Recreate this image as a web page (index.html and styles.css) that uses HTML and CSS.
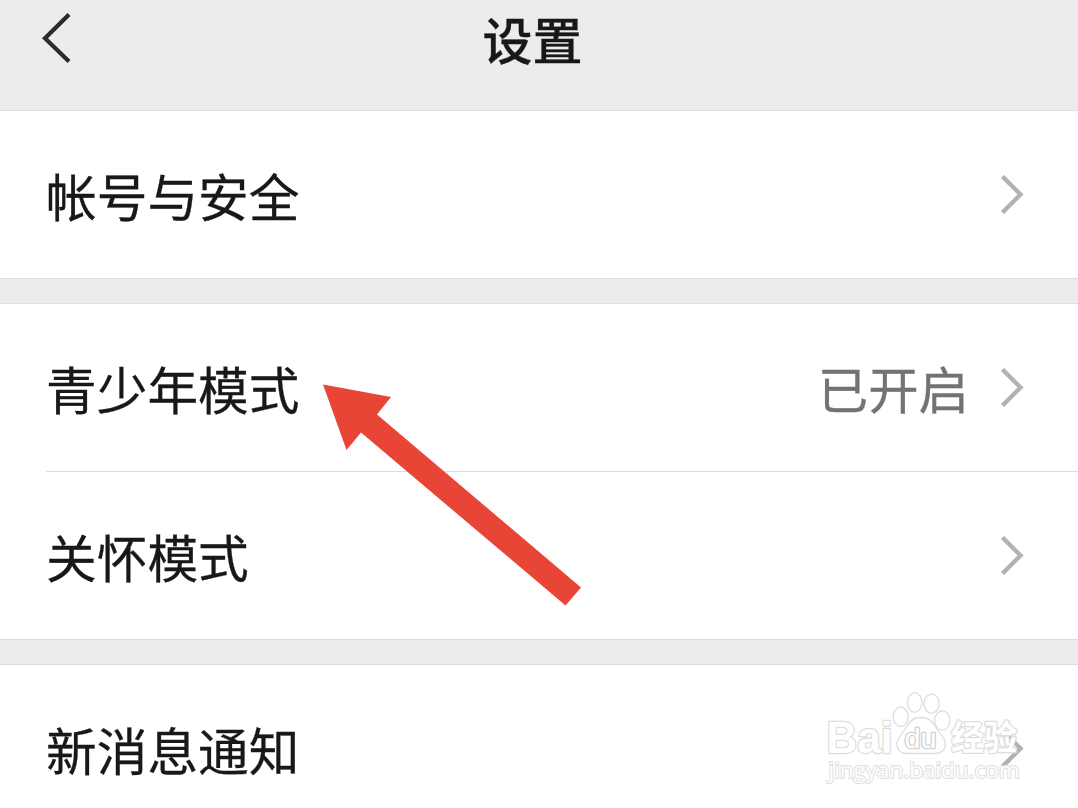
FILE: index.html
```
<!DOCTYPE html>
<html lang="zh-CN">
<head>
	<meta charset="utf-8">
	<title>设置</title>
	<link rel="stylesheet" href="styles.css">
</head>
<body>
	<div class="header">
		<svg class="back" width="32" height="56" viewBox="0 0 32 56"><path d="M29 4.5 L5 28.2 L29 51.5"/></svg>
		<h1 class="title">设置</h1>
	</div>
	<ul class="group">
		<li class="item">
			<span class="name">帐号与安全</span>
			<svg class="more" width="24" height="40" viewBox="0 0 24 40"><path d="M2.5 1.5 L20.5 19.5 L2.5 37.5"/></svg>
		</li>
	</ul>
	<ul class="group">
		<li class="item">
			<span class="name">青少年模式</span>
			<span class="state">已开启</span>
			<svg class="more" width="24" height="40" viewBox="0 0 24 40"><path d="M2.5 1.5 L20.5 19.5 L2.5 37.5"/></svg>
		</li>
		<li class="item">
			<span class="name">关怀模式</span>
			<svg class="more" width="24" height="40" viewBox="0 0 24 40"><path d="M2.5 1.5 L20.5 19.5 L2.5 37.5"/></svg>
		</li>
	</ul>
	<ul class="group last">
		<li class="item">
			<span class="name">新消息通知</span>
			<svg class="more" width="24" height="40" viewBox="0 0 24 40"><path d="M2.5 1.5 L20.5 19.5 L2.5 37.5"/></svg>
		</li>
	</ul>
	<!-- 红色箭头 -->
	<svg class="arrow" width="260" height="224" viewBox="322 383 260 224">
		<path d="M323 384.5 L391 397 L377 414.5 L581 587.5 L565.5 605.5 L361 432.5 L346.5 450 Z"/>
	</svg>
	<!-- 水印 -->
	<svg class="mark" width="210" height="100" viewBox="820 688 210 100">
		<text class="bai" x="826.5" y="752.5" textLength="66" lengthAdjust="spacingAndGlyphs">Bai</text>
		<ellipse cx="900.7" cy="716.7" rx="7.5" ry="9.8"/>
		<ellipse cx="914.7" cy="702.5" rx="7.2" ry="9.8"/>
		<ellipse cx="931.5" cy="703.7" rx="7.6" ry="9.6"/>
		<ellipse cx="942.3" cy="720.5" rx="7.6" ry="9.6"/>
		<path d="M921 717.5 C929 717.5 933 722 937 729 C940 734 945.5 738 945.5 744 C945.5 750 941 753.5 935 753.5 L907 753.5 C901 753.5 897 750 897 744 C897 738 902 734 905 729 C909 722 913 717.5 921 717.5 Z"/>
		<text class="du" x="904.5" y="747.5" textLength="32" lengthAdjust="spacingAndGlyphs">du</text>
		<text class="jy" x="951" y="749.5" textLength="66" lengthAdjust="spacingAndGlyphs">经验</text>
		<text class="site" x="828.5" y="778" textLength="191" lengthAdjust="spacingAndGlyphs">jingyan.baidu.com</text>
	</svg>
</body>
</html>
```
FILE: styles.css
```
*{
	padding: 0;
	margin: 0;
	box-sizing: border-box;
}
body{
	height: 808px;
	overflow: hidden;
	position: relative;
	background: #ececec;
	color: #181818;
	font-family: "Noto Sans CJK SC", sans-serif;
}
li{
	list-style: none;
}
.header{
	height: 110px;
	display: grid;
	grid-template-columns: 32px 1fr 32px;
	align-items: start;
	padding: 10px 53px 0 40px;
}
.title{
	height: 56px;
	line-height: 56px;
	text-align: center;
	font-size: 50px;
	font-weight: 500;
	-webkit-text-stroke: 0.3px #181818;
}
.back,.more{
	display: block;
	fill: none;
}
.back{
	stroke: #2b2b2b;
	stroke-width: 4.2;
}
.more{
	stroke: #b2b2b2;
	stroke-width: 4.4;
}
.group{
	background: #fff;
	border-top: 1px solid #dedede;
	border-bottom: 1px solid #dedede;
	margin-bottom: 24px;
}
.item{
	height: 167px;
	margin-left: 46px;
	padding-right: 54px;
	display: flex;
	align-items: center;
}
.item+.item{
	height: 168px;
	border-top: 1px solid #dedede;
}
.last{
	border-bottom: 0;
	margin-bottom: 0;
}
.last .item{
	height: 143px;
	padding-top: 24px;
}
.name{
	flex: 1;
	font-size: 50.7px;
	line-height: 76px;
	-webkit-text-stroke: 0.3px #181818;
}
.state{
	font-size: 50.4px;
	line-height: 76px;
	margin-right: 31px;
	color: #737373;
	-webkit-text-stroke: 0.3px #737373;
}
.arrow{
	position: absolute;
	left: 322px;
	top: 383px;
	fill: #e94536;
}
.mark{
	position: absolute;
	left: 820px;
	top: 688px;
	fill: #fff;
	stroke: #dedede;
	stroke-width: 1.3;
	font-family: "Liberation Sans", sans-serif;
}
.mark text{
	paint-order: stroke;
	stroke-width: 2.6;
	stroke-linejoin: round;
}
.bai{
	font-size: 45px;
	font-weight: bold;
}
.mark .du{
	font-size: 28px;
	stroke: #d2d2d2;
}
.jy{
	font-family: "Noto Sans CJK SC", sans-serif;
	font-size: 34px;
	font-weight: bold;
}
.mark .site{
	font-family: "Open Sans", sans-serif;
	font-size: 22px;
	stroke-width: 2;
}
```
